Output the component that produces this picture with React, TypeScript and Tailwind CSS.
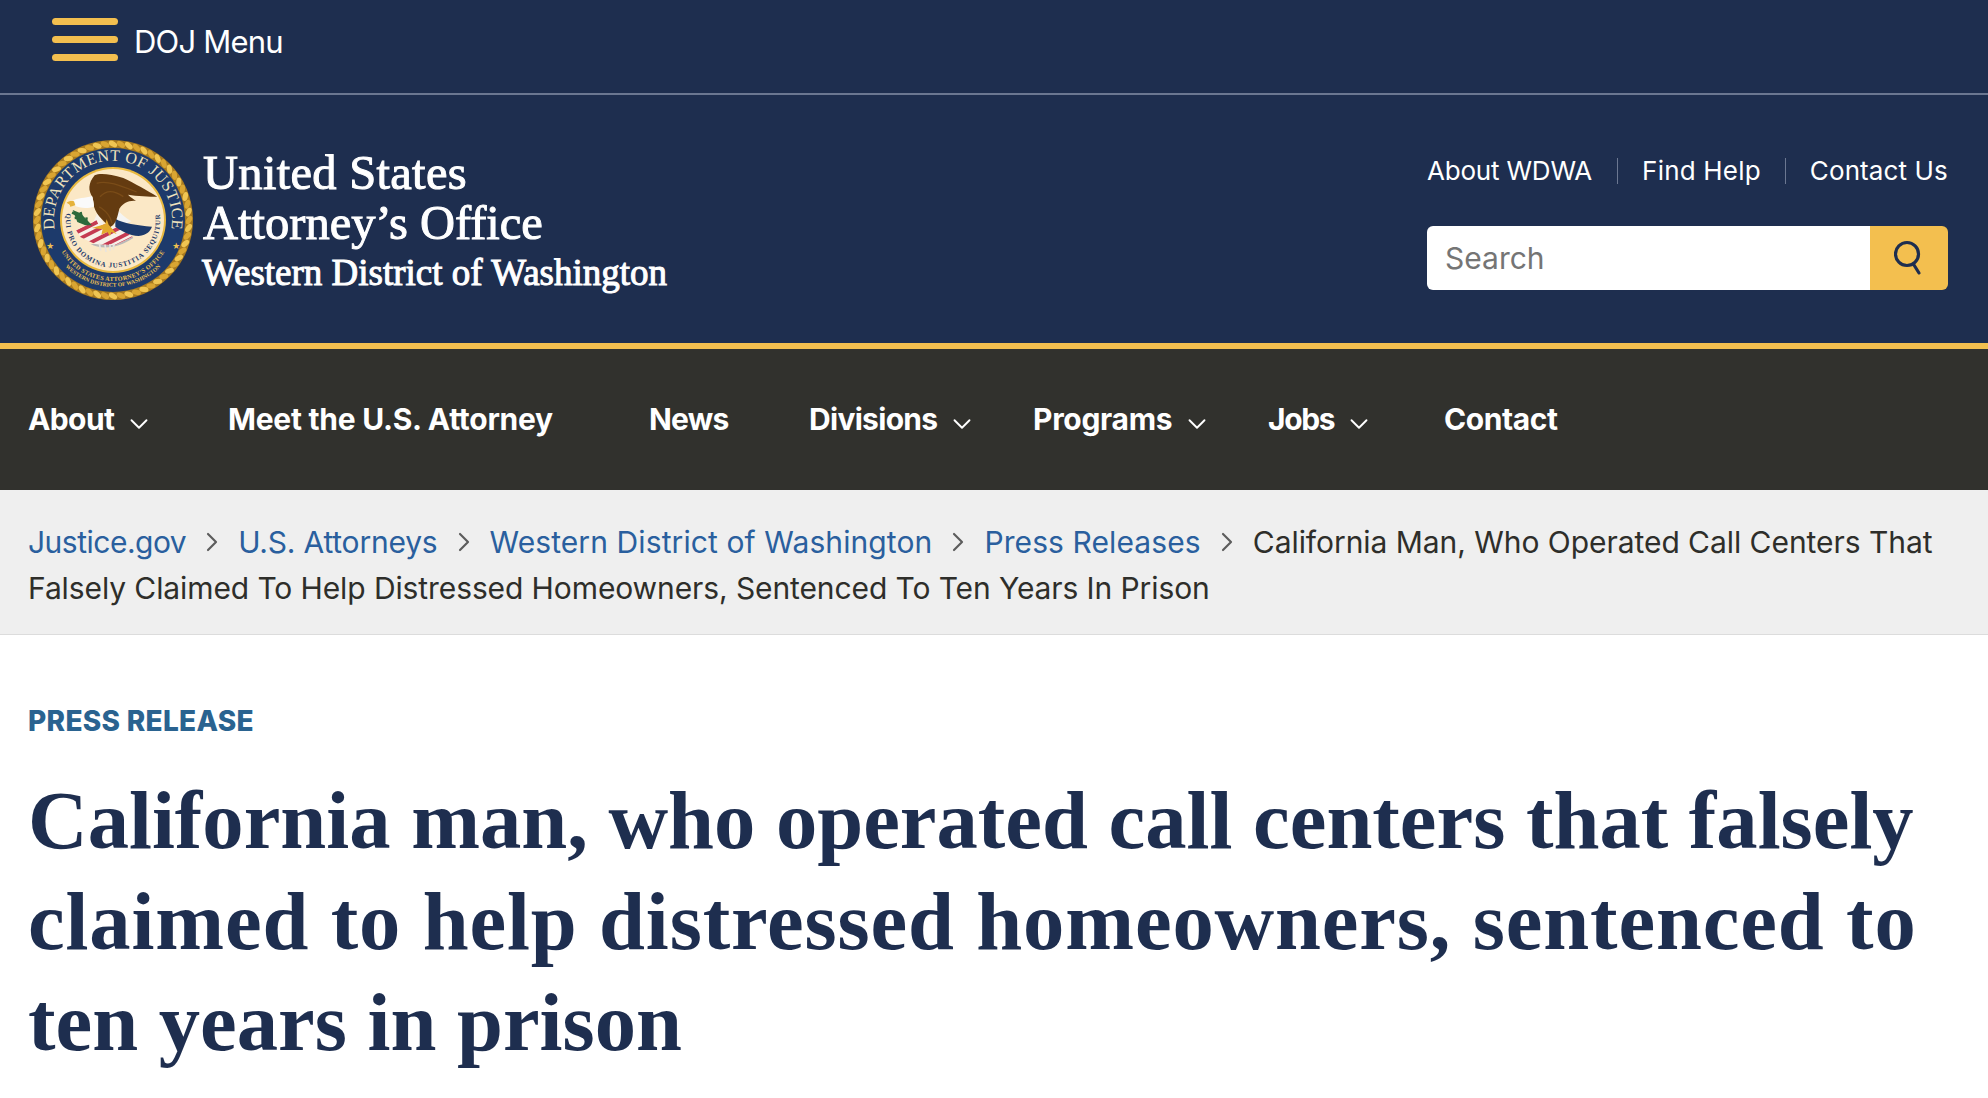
import React from "react";
import { ChevronDown, ChevronRight } from "lucide-react";

const sans = "font-['Inter','Liberation_Sans',sans-serif]";
const serif = "font-['Liberation_Serif','Noto_Serif',serif]";

function Seal() {
  const rope = Array.from({ length: 60 }, (_, i) => {
    const a = (i / 60) * Math.PI * 2;
    return { x: 81 + 76 * Math.cos(a), y: 81 + 76 * Math.sin(a), r: (a * 180) / Math.PI };
  });
  return (
    <svg width="162" height="162" viewBox="0 0 162 162" className="shrink-0">
      <circle cx="81" cy="81" r="80" fill="#a87a1f" />
      {rope.map((p, i) => (
        <ellipse key={i} cx={p.x} cy={p.y} rx="2.6" ry="4.6" fill={i % 2 ? "#f0c552" : "#d9a532"} transform={`rotate(${p.r + 30} ${p.x} ${p.y})`} />
      ))}
      <circle cx="81" cy="81" r="72" fill="#1d3a6b" />
      <circle cx="81" cy="81" r="53" fill="#e8b93f" />
      <circle cx="81" cy="81" r="51" fill="#fbe8c6" />
      <defs>
        <path id="sealTop" d="M 24 96 A 59 59 0 1 1 138 96" />
        <path id="sealMotto" d="M 34 77 A 47.2 47.2 0 1 0 128 77" />
        <path id="sealB1" d="M 22 93 A 60 60 0 0 0 140 93" />
        <path id="sealB2" d="M 26 119 A 67 67 0 0 0 136 119" />
        <clipPath id="flagClip">
          <path d="M48 210 L100 186 L112 160 L135 195 L175 200 L218 230 L165 256 L105 252 L62 232 Z" />
        </clipPath>
      </defs>
      <text fontFamily="Liberation Serif, serif" fontSize="16" fill="#efe3bd" letterSpacing="0.4">
        <textPath href="#sealTop" startOffset="50%" textAnchor="middle">DEPARTMENT OF JUSTICE</textPath>
      </text>
      <g transform="translate(28 21) scale(0.3333)">
        <path d="M92 252 C120 268 170 268 220 234 L218 230 L165 256 L105 252 Z" fill="#b9b9b9" />
        <g clipPath="url(#flagClip)">
          <rect x="40" y="150" width="190" height="120" fill="#f7f1ea" />
          <path d="M40 222 L112 186 M52 240 L150 190 M72 258 L190 198 M110 268 L220 212 M150 268 L230 228" stroke="#c53a52" strokeWidth="11" fill="none" />
        </g>
        <path d="M118 250 L122 272 M135 254 L138 276 M150 252 L150 272 M162 250 L160 268" stroke="#e8e4de" strokeWidth="5" />
        <path d="M166 142 C180 160 196 174 214 184 L176 200 L162 196 Z" fill="#f4f4f2" />
        <path d="M166 176 C190 190 230 196 276 200 C270 214 262 224 236 228 C208 226 182 212 166 200 Z" fill="#1d3a6b" />
        <path d="M98 112 C84 92 84 70 104 46 C120 38 150 42 190 54 C224 70 262 92 292 110 C270 110 230 108 204 104 C212 112 222 118 228 122 C210 122 192 124 178 146 C172 170 170 190 150 202 C136 186 110 168 102 140 Z" fill="#643b10" />
        <path d="M110 70 C140 60 180 76 230 96 M120 110 C140 90 160 90 190 110 M118 140 C130 150 150 160 156 190" stroke="#7a4c18" strokeWidth="4" fill="none" />
        <path d="M38 122 C52 114 76 114 96 108 C100 122 102 130 102 140 C84 146 60 146 42 136 Z" fill="#fafafa" />
        <path d="M20 128 C26 122 36 122 42 124 L46 136 C38 138 34 140 30 140 C32 134 26 132 20 128 Z" fill="#e5b23a" />
        <path d="M38 150 L62 160 L96 196 L76 196 L52 186 Z" fill="#2c6a3c" />
        <path d="M36 158 L50 164 M44 174 L62 172 M58 186 L74 180 M62 156 L66 176 M80 172 L78 190" stroke="#2c6a3c" strokeWidth="7" />
        <path d="M96 204 L136 192 L140 178 L146 194 L170 222 L154 216 L150 228 L142 216 L124 224 L128 208 Z" fill="#e3a92d" />
      </g>
      <text fontFamily="Liberation Serif, serif" fontSize="7" fill="#1d3a6b" fontWeight="700" letterSpacing="0.9">
        <textPath href="#sealMotto" startOffset="50%" textAnchor="middle">QUI PRO DOMINA JUSTITIA SEQUITUR</textPath>
      </text>
      <text fontFamily="Liberation Serif, serif" fontSize="6.2" fill="#eec050" fontWeight="700" letterSpacing="0.3">
        <textPath href="#sealB1" startOffset="50%" textAnchor="middle">UNITED STATES ATTORNEY'S OFFICE</textPath>
      </text>
      <text fontFamily="Liberation Serif, serif" fontSize="5.6" fill="#eec050" fontWeight="700">
        <textPath href="#sealB2" startOffset="50%" textAnchor="middle">WESTERN DISTRICT OF WASHINGTON</textPath>
      </text>
      <text x="14" y="110" fontSize="8" fill="#eec050">★</text>
      <text x="140" y="110" fontSize="8" fill="#eec050">★</text>
    </svg>
  );
}

function NavItem({ label, chevron, className }: { label: string; chevron?: boolean; className: string }) {
  return (
    <a className={`flex items-center text-white font-bold text-[30px] leading-[30px] ${className}`}>
      {label}
      {chevron && <ChevronDown className="ml-[10px] mt-[5px] -mb-[5px] -my-[5px] text-white" size={30} strokeWidth={1.5} />}
    </a>
  );
}

function Crumb({ label, className }: { label: string; className: string }) {
  return (
    <>
      <a className={`text-[#2a5f9e] ${className}`}>{label}</a>
      <ChevronRight className="mx-[10px] text-[#5c5c5c]" size={32} strokeWidth={1.6} />
    </>
  );
}

export default function App() {
  return (
    <div className={`w-full h-[1098px] overflow-hidden bg-white ${sans}`}>
      <div className="bg-[#1e2e4f] h-[95px] border-b-2 border-[#6b7791] flex items-start pl-[52px] pt-[18px]">
        <div className="flex flex-col gap-[11px] w-[66px]">
          <span className="block h-[7px] rounded-full bg-[#f3bf4f]" />
          <span className="block h-[7px] rounded-full bg-[#f3bf4f]" />
          <span className="block h-[7px] rounded-full bg-[#f3bf4f]" />
        </div>
        <span className="ml-[16px] mt-[4px] text-white text-[31px] leading-[40px] tracking-[-0.8px]">DOJ Menu</span>
      </div>

      <div className="bg-[#1e2e4f] h-[254px] border-b-[6px] border-[#f3bf4f] flex justify-between pl-[32px] pr-[40px]">
        <div className="flex pt-[44px]">
          <Seal />
          <div className="ml-[9px] text-white pt-[9px] [-webkit-text-stroke:1px_white]">
            <div className={`${serif} text-[48.5px] leading-[50px] tracking-[0.3px]`}>United States</div>
            <div className={`${serif} text-[48.5px] leading-[50px]`}>Attorney’s Office</div>
            <div className={`${serif} text-[37px] leading-[50px] -ml-px`}>Western District of Washington</div>
          </div>
        </div>
        <div className="w-[521px] pt-[62px]">
          <div className="flex items-center text-white text-[26px] leading-[28px]">
            <span className="tracking-[-0.2px]">About WDWA</span>
            <span className="ml-[25px] mr-[24px] h-[26px] w-px bg-[#6b7791]" />
            <span className="tracking-[0.2px]">Find Help</span>
            <span className="mx-[24px] h-[26px] w-px bg-[#6b7791]" />
            <span className="tracking-[0.1px]">Contact Us</span>
          </div>
          <div className="flex mt-[41px] h-[64px] rounded-[6px] overflow-hidden">
            <div className="flex-1 bg-white pl-[18px] flex items-center text-[30px] text-[#757575]">Search</div>
            <div className="w-[78px] bg-[#f3bf4f] flex items-center justify-center">
              <svg width="30" height="36" viewBox="0 0 30 36" fill="none" stroke="#1e2e4f" strokeWidth="3.2" strokeLinecap="round">
                <circle cx="13" cy="14" r="11.5" />
                <path d="M20 25 L25 33" />
              </svg>
            </div>
          </div>
        </div>
      </div>

      <div className="bg-[#31312d] h-[141px] flex items-start pl-[28px] pt-[55px]">
        <NavItem label="About" chevron className="w-[200px] tracking-[-0.6px]" />
        <NavItem label="Meet the U.S. Attorney" className="w-[421px] tracking-[-0.25px]" />
        <NavItem label="News" className="w-[160px] tracking-[-0.8px]" />
        <NavItem label="Divisions" chevron className="w-[224px] tracking-[-0.7px]" />
        <NavItem label="Programs" chevron className="w-[235px] tracking-[-0.3px]" />
        <NavItem label="Jobs" chevron className="w-[176px] tracking-[-1.4px]" />
        <NavItem label="Contact" className="tracking-[-0.4px]" />
      </div>

      <div className="bg-[#efefef] h-[145px] border-b border-[#dcdcdc] px-[28px] pt-[29px] text-[30px] leading-[46px] text-[#2e2e2a]">
        <div className="flex items-center whitespace-nowrap">
          <Crumb label="Justice.gov" className="tracking-[-0.5px]" />
          <Crumb label="U.S. Attorneys" className="tracking-[-0.2px]" />
          <Crumb label="Western District of Washington" className="tracking-[0.1px]" />
          <Crumb label="Press Releases" className="tracking-[0.1px]" />
          <span className="tracking-[-0.05px]">California Man, Who Operated Call Centers That</span>
        </div>
        <div className="tracking-[-0.1px]">Falsely Claimed To Help Distressed Homeowners, Sentenced To Ten Years In Prison</div>
      </div>

      <div className="px-[28px] pt-[68px]">
        <div className="text-[#2a6390] font-extrabold text-[28px] leading-[36px] tracking-[0.3px]">PRESS RELEASE</div>
        <h1 className={`${serif} mt-[31px] text-[#1e2e4f] font-bold text-[82.6px] leading-[101px]`}>
          <span className="block">California man, who operated call centers that falsely</span>
          <span className="block tracking-[0.85px]">claimed to help distressed homeowners, sentenced to</span>
          <span className="block">ten years in prison</span>
        </h1>
      </div>
    </div>
  );
}
